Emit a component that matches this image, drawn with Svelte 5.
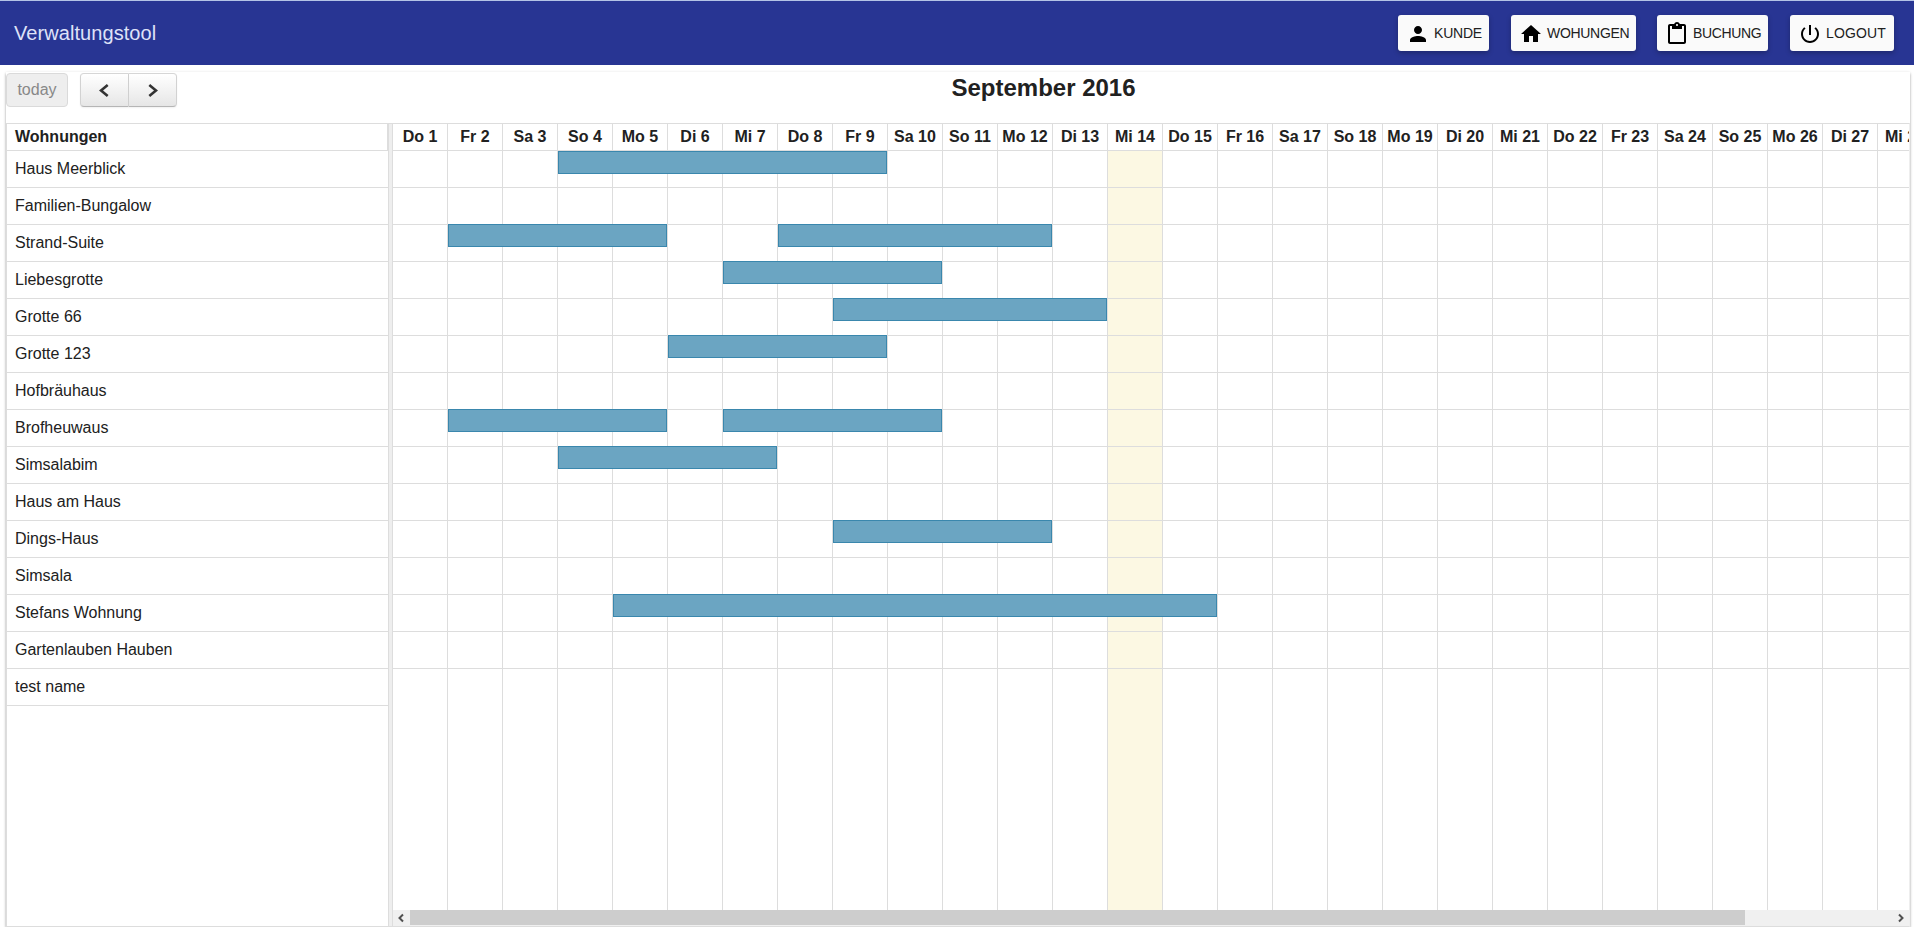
<script>
  const nav = [
    { id: 'kunde', label: 'KUNDE', width: 91, spacing: -0.2 },
    { id: 'home', label: 'WOHUNGEN', width: 125, spacing: -0.3 },
    { id: 'book', label: 'BUCHUNG', width: 111, spacing: -0.35 },
    { id: 'out', label: 'LOGOUT', width: 104, spacing: 0.15 }
  ];
  const names = ['Do', 'Fr', 'Sa', 'So', 'Mo', 'Di', 'Mi'];
  const days = Array.from({ length: 28 }, (_, i) => ({ n: i + 1, label: `${names[i % 7]} ${i + 1}` }));
  // Bookings are [first day, number of days].
  const rooms = [
    { name: 'Haus Meerblick', bookings: [[4, 6]] },
    { name: 'Familien-Bungalow', bookings: [] },
    { name: 'Strand-Suite', bookings: [[2, 4], [8, 5]] },
    { name: 'Liebesgrotte', bookings: [[7, 4]] },
    { name: 'Grotte 66', bookings: [[9, 5]] },
    { name: 'Grotte 123', bookings: [[6, 4]] },
    { name: 'Hofbräuhaus', bookings: [] },
    { name: 'Brofheuwaus', bookings: [[2, 4], [7, 4]] },
    { name: 'Simsalabim', bookings: [[4, 4]] },
    { name: 'Haus am Haus', bookings: [] },
    { name: 'Dings-Haus', bookings: [[9, 4]] },
    { name: 'Simsala', bookings: [] },
    { name: 'Stefans Wohnung', bookings: [[5, 11]] },
    { name: 'Gartenlauben Hauben', bookings: [] },
    { name: 'test name', bookings: [] }
  ];
</script>

<header>
  <h1>Verwaltungstool</h1>
  <nav>
    {#each nav as item}
      <button class="nav-btn {item.id}" style="width: {item.width}px; letter-spacing: {item.spacing}px">
        <svg viewBox="0 0 24 24" width="24" height="24">
          {#if item.id === 'kunde'}
            <path d="M12 12c2.21 0 4-1.79 4-4s-1.79-4-4-4-4 1.79-4 4 1.79 4 4 4zm0 2c-2.67 0-8 1.34-8 4v2h16v-2c0-2.66-5.33-4-8-4z" />
          {:else if item.id === 'home'}
            <path d="M10 20v-6h4v6h5v-8h3L12 3 2 12h3v8z" />
          {:else if item.id === 'book'}
            <path d="M19 2h-4.18C14.4.84 13.3 0 12 0S9.6.84 9.18 2H5c-1.1 0-2 .9-2 2v16c0 1.1.9 2 2 2h14c1.1 0 2-.9 2-2V4c0-1.1-.9-2-2-2zm-7 0c.55 0 1 .45 1 1s-.45 1-1 1-1-.45-1-1 .45-1 1-1zm7 18H5V4h2v3h10V4h2v16z" />
          {:else}
            <path d="M13 3h-2v10h2V3zm4.83 2.17l-1.42 1.42C17.99 7.86 19 9.81 19 12c0 3.87-3.13 7-7 7s-7-3.13-7-7c0-2.19 1.01-4.14 2.58-5.42L6.17 5.17C4.23 6.82 3 9.26 3 12c0 4.97 4.03 9 9 9s9-4.03 9-9c0-2.74-1.23-5.18-3.17-6.83z" />
          {/if}
        </svg>
        <span>{item.label}</span>
      </button>
    {/each}
  </nav>
</header>

<main>
  <div class="toolbar">
    <div class="controls">
      <button class="btn today">today</button>
      <div class="group">
        <button class="btn prev" aria-label="prev">
          <svg width="10" height="13" viewBox="0 0 10 13"><path d="M8.7 1 2 6.5 8.7 12" /></svg>
        </button>
        <button class="btn next" aria-label="next">
          <svg width="10" height="13" viewBox="0 0 10 13"><path d="M1.3 1 8 6.5 1.3 12" /></svg>
        </button>
      </div>
    </div>
    <h2>September 2016</h2>
  </div>

  <div class="calendar">
    <section class="rooms">
      <div class="room-head">Wohnungen</div>
      {#each rooms as room}
        <div class="room">{room.name}</div>
      {/each}
    </section>
    <div class="divider"></div>
    <section class="timeline">
      <div class="day-heads">
        {#each days as day}
          <div class="day-head">{day.label}</div>
        {/each}
      </div>
      <div class="canvas">
        <div class="columns">
          {#each days as day}
            <div class="column" class:now={day.n === 14}></div>
          {/each}
        </div>
        <div class="lanes">
          {#each rooms as room, r}
            <div class="lane">
              {#each room.bookings as [start, length]}
                <div
                  class="booking"
                  class:first={r === 0}
                  style="left: {(start - 1) * 55}px; width: {length * 55 - 1}px"
                ></div>
              {/each}
            </div>
          {/each}
        </div>
      </div>
      <div class="scrollbar">
        <svg width="17" height="16" viewBox="0 0 17 16"><path d="M10 4.500 6.500 8l3.500 3.500" /></svg>
        <div class="thumb"></div>
        <div class="track"></div>
        <svg width="17" height="16" viewBox="0 0 17 16"><path d="M7 4.500 10.500 8 7 11.500" /></svg>
      </div>
    </section>
  </div>
</main>

<style>
  :global(body) {
    margin: 0;
    background: #fff;
    overflow: hidden;
    font-family: "Liberation Sans", Arial, sans-serif;
    color: #212121;
  }
  header {
    box-sizing: border-box;
    height: 65px;
    border-top: 1px solid #b4c3e6;
    background: #283593;
    display: flex;
    justify-content: space-between;
    align-items: flex-start;
    padding: 0 20px 0 14px;
  }
  h1 {
    margin: 0;
    font-size: 20px;
    font-weight: 400;
    line-height: 64px;
    letter-spacing: 0.07px;
    color: #dfe2f8;
  }
  nav {
    display: flex;
    gap: 22px;
    padding-top: 14px;
  }
  .nav-btn {
    box-sizing: border-box;
    height: 36px;
    padding: 0 0 0 8px;
    border: 0;
    border-radius: 3px;
    background: #fafafa;
    box-shadow: 0 2px 5px rgba(0, 0, 0, 0.26);
    display: flex;
    align-items: center;
    font: 14px "Liberation Sans", Arial, sans-serif;
    color: #212121;
    white-space: nowrap;
  }
  .nav-btn.book {
    margin-left: -1px;
  }
  .nav-btn svg {
    flex: none;
    margin: 2px 4px 0 0;
    fill: #000;
  }
  main {
    box-sizing: border-box;
    margin: 7px 4px 0 6px;
    height: 855px;
    background: #fff;
    box-shadow: 0 2px 2px rgba(0, 0, 0, 0.2), 0 1px 3px rgba(0, 0, 0, 0.22);
    display: flex;
    flex-direction: column;
  }
  .toolbar {
    height: 51px;
    flex: none;
    display: flex;
    align-items: flex-start;
  }
  .controls {
    display: flex;
    gap: 12px;
    padding-top: 1px;
  }
  .group {
    display: flex;
  }
  .btn {
    box-sizing: border-box;
    height: 34px;
    margin: 0;
    padding: 0;
    border: 1px solid;
    border-color: #d6d6d6 #d2d2d2 #b5b5b5;
    background: linear-gradient(#fff, #e6e6e6);
    box-shadow: 0 1px 2px rgba(0, 0, 0, 0.06);
    font: 16px "Liberation Sans", Arial, sans-serif;
    display: flex;
    align-items: center;
    justify-content: center;
  }
  .btn path {
    fill: none;
    stroke: #333;
    stroke-width: 2.6;
  }
  .today {
    width: 62px;
    border-radius: 4px;
    border-color: #dadada;
    background: #eee;
    color: #888;
    box-shadow: none;
  }
  .prev {
    width: 49px;
    padding-right: 2px;
    border-radius: 4px 0 0 4px;
  }
  .next {
    width: 48px;
    border-left: 0;
    border-radius: 0 4px 4px 0;
  }
  h2 {
    flex: 1;
    margin: 0;
    padding-top: 2px;
    text-align: center;
    font-size: 24px;
    line-height: 28px;
    font-weight: 700;
  }
  .calendar {
    flex: 1;
    min-height: 0;
    display: flex;
    border-top: 1px solid #ddd;
    border-left: 1px solid #ddd;
    border-right: 1px solid #eee;
    border-bottom: 1px solid #ddd;
  }
  .rooms {
    width: 381px;
    flex: none;
  }
  .room-head {
    height: 26px;
    border-bottom: 1px solid #ddd;
    border-right: 1px solid #ddd;
    padding-left: 8px;
    font-size: 16px;
    font-weight: 700;
    line-height: 26px;
  }
  .room {
    height: 36px;
    border-bottom: 1px solid #ddd;
    padding-left: 8px;
    font-size: 16px;
    line-height: 35px;
  }
  .divider {
    width: 3px;
    flex: none;
    border-left: 1px solid #ddd;
    border-right: 1px solid #ddd;
    background: #eee;
  }
  .timeline {
    flex: 1;
    min-width: 0;
    display: flex;
    flex-direction: column;
    overflow: hidden;
  }
  .day-heads {
    display: flex;
    height: 26px;
    flex: none;
    border-bottom: 1px solid #ddd;
  }
  .day-head {
    box-sizing: border-box;
    width: 55px;
    flex: none;
    border-right: 1px solid #ddd;
    text-align: center;
    font-size: 16px;
    font-weight: 700;
    line-height: 26px;
    white-space: nowrap;
  }
  .canvas {
    flex: 1;
    display: grid;
    min-height: 0;
  }
  .columns,
  .lanes {
    grid-area: 1 / 1;
    min-width: 0;
  }
  .columns {
    display: flex;
  }
  .column {
    box-sizing: border-box;
    width: 55px;
    flex: none;
    border-right: 1px solid #ddd;
  }
  .now {
    background: #fcf8e3;
  }
  .lane {
    position: relative;
    height: 36px;
    border-bottom: 1px solid #ddd;
  }
  .lane:last-child {
    border-bottom: 0;
  }
  .booking {
    position: absolute;
    top: -1px;
    box-sizing: border-box;
    height: 23px;
    border: 1px solid #3a87ad;
    background: #6ba5c2;
  }
  .booking.first {
    top: 0;
  }
  .scrollbar {
    height: 16px;
    flex: none;
    display: flex;
    background: #f0f0f0;
  }
  .scrollbar svg {
    flex: none;
  }
  .scrollbar path {
    fill: none;
    stroke: #505050;
    stroke-width: 2;
  }
  .thumb {
    width: 1335px;
    height: 15px;
    flex: none;
    background: #cdcdcd;
  }
  .track {
    flex: 1;
  }
</style>
